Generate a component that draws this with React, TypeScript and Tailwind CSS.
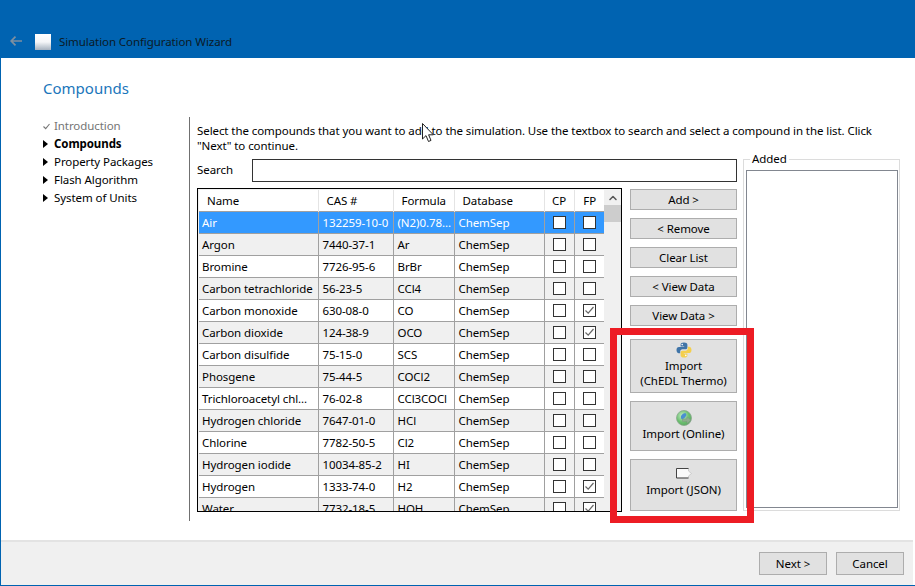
import { ChevronUp } from 'lucide-react';

type Compound = { name: string; cas: string; formula: string; fp?: boolean };

const compounds: Compound[] = [
  { name: 'Air', cas: '132259-10-0', formula: '(N2)0.78...' },
  { name: 'Argon', cas: '7440-37-1', formula: 'Ar' },
  { name: 'Bromine', cas: '7726-95-6', formula: 'BrBr' },
  { name: 'Carbon tetrachloride', cas: '56-23-5', formula: 'CCl4' },
  { name: 'Carbon monoxide', cas: '630-08-0', formula: 'CO', fp: true },
  { name: 'Carbon dioxide', cas: '124-38-9', formula: 'OCO', fp: true },
  { name: 'Carbon disulfide', cas: '75-15-0', formula: 'SCS' },
  { name: 'Phosgene', cas: '75-44-5', formula: 'COCl2' },
  { name: 'Trichloroacetyl chl...', cas: '76-02-8', formula: 'CCl3COCl' },
  { name: 'Hydrogen chloride', cas: '7647-01-0', formula: 'HCl' },
  { name: 'Chlorine', cas: '7782-50-5', formula: 'Cl2' },
  { name: 'Hydrogen iodide', cas: '10034-85-2', formula: 'HI' },
  { name: 'Hydrogen', cas: '1333-74-0', formula: 'H2', fp: true },
  { name: 'Water', cas: '7732-18-5', formula: 'HOH', fp: true },
];

const steps = [
  { label: 'Compounds', bold: true },
  { label: 'Property Packages' },
  { label: 'Flash Algorithm' },
  { label: 'System of Units' },
];

function Check({ checked }: { checked?: boolean }) {
  return (
    <div className="w-[13px] h-[13px] mx-auto border border-[#333] bg-white flex items-center justify-center">
      {checked && (
        <svg width="11" height="11" viewBox="0 0 11 11">
          <path d="M1.5 5.5 L4.2 8.2 L9.5 2" fill="none" stroke="#666" strokeWidth="1.2" />
        </svg>
      )}
    </div>
  );
}

function Btn({ label, className }: { label: string; className: string }) {
  return (
    <button className={`bg-[#e1e1e1] border border-[#adadad] flex items-center justify-center text-black ${className}`}>
      {label}
    </button>
  );
}

function PythonIcon() {
  return (
    <svg width="16" height="16" viewBox="0 0 16 16">
      <path d="M8 .5C5.6.5 4.6 1.4 4.6 2.8V4.4H8.2V5H3C1.4 5 .5 6.2.5 8.1s.9 3.2 2.3 3.2H4.2V9.4c0-1.2 1-2.2 2.2-2.2h3.2c1 0 1.8-.8 1.8-1.8V2.8C11.4 1.4 10 .5 8 .5z" fill="#3f74a8" />
      <path d="M8 15.5c2.4 0 3.4-.9 3.4-2.3v-1.6H7.8V11H13c1.6 0 2.5-1.2 2.5-3.1s-.9-3.2-2.3-3.2h-1.4v1.9c0 1.2-1 2.2-2.2 2.2H6.4c-1 0-1.8.8-1.8 1.8v2.6c0 1.4 1.4 2.3 3.4 2.3z" fill="#f4cf4d" />
      <circle cx="6.2" cy="2.6" r=".8" fill="#fff" />
      <circle cx="9.8" cy="13.4" r=".8" fill="#fff" />
    </svg>
  );
}

function GlobeIcon() {
  return (
    <svg width="16" height="16" viewBox="0 0 16 16">
      <defs>
        <radialGradient id="globe" cx="40%" cy="35%" r="70%">
          <stop offset="0%" stopColor="#c8eec8" />
          <stop offset="60%" stopColor="#6cc070" />
          <stop offset="100%" stopColor="#5aa860" />
        </radialGradient>
      </defs>
      <circle cx="8" cy="8" r="7.5" fill="url(#globe)" stroke="#8aa88e" strokeWidth=".8" />
      <path d="M5 6c1-2 3-3 4.5-3L10.5 5 9 7.5 6.5 9.5 5 8.5z" fill="#4a8fd0" />
      <path d="M6.5 9h4.5V6.8l4 3.4-4 3.4v-2.2H6.5z" fill="#8fae90" stroke="#7a987c" strokeWidth=".5" />
    </svg>
  );
}

function TagIcon() {
  return (
    <svg width="16" height="12" viewBox="0 0 16 12">
      <path d="M.5 1.5H12.5V4L15.5 6.5 12.5 9V11H.5z" fill="#fafafa" stroke="#c4c4c4" strokeWidth=".8" />
      <path d="M12.5 1.5H.5V11H12.5" fill="none" stroke="#444" strokeWidth="1" />
    </svg>
  );
}

export default function App() {
  return (
    <div className="w-[915px] h-[586px] bg-white flex flex-col overflow-hidden relative text-[11.5px] tracking-[-0.08px] text-black font-['Noto_Sans',sans-serif]">
      <div className="h-[58px] bg-[#0063b1] flex items-end pl-[10px] pb-[8px] shrink-0">
        <svg width="12" height="10" viewBox="0 0 12 10" className="mb-[4px]">
          <path d="M12 5H1.5M5.5.7 1.2 5l4.3 4.3" fill="none" stroke="#7d8fa0" strokeWidth="1.7" />
        </svg>
        <div className="w-4 h-4 ml-[13px] bg-gradient-to-b from-white via-[#f4f6f8] to-[#a6b2bf]" />
        <span className="ml-2 leading-4 text-[#0b1a26]">Simulation Configuration Wizard</span>
      </div>

      <div className="flex-1 flex flex-col border-l border-[#0063b1] min-h-0">
        <div className="pl-[42px] pt-[19px] text-[15px] tracking-normal leading-[22px] text-[#1a76bb] h-[59px] shrink-0">Compounds</div>

        <div className="flex h-[404px] pl-[42px]">
          <div className="w-[146px] shrink-0 flex flex-col">
            <div className="h-[18px] flex items-center text-[#757575]">
              <svg width="7" height="7" viewBox="0 0 7 7" className="mr-[4px]">
                <path d="M.5 3.5 2.7 5.7 6.5 1" fill="none" stroke="#777" strokeWidth="1.1" />
              </svg>
              Introduction
            </div>
            {steps.map(s => (
              <div key={s.label} className={`h-[18px] flex items-center ${s.bold ? 'font-bold' : ''}`}>
                <svg width="5" height="8" viewBox="0 0 5 8" className="mr-[6px]">
                  <path d="M0 0 5 4 0 8z" fill="#000" />
                </svg>
                {s.label}
              </div>
            ))}
          </div>

          <div className="w-[1px] bg-[#707070] shrink-0" />

          <div className="pl-[7px] flex-1 min-w-0">
            <p className="w-[690px] leading-[15px] pt-[6px] h-[42px]">
              Select the compounds that you want to add to the simulation. Use the textbox to search and select a compound in the list. Click "Next" to continue.
            </p>
            <div className="flex gap-[6px]">
              <div className="w-[540px]">
                <div className="flex items-center h-[23px]">
                  <span className="w-[55px] mt-[-2px]">Search</span>
                  <div className="w-[485px] h-[23px] border border-[#333] bg-white" />
                </div>
                <div className="flex gap-[8px] mt-[6px]">
                  <div className="w-[425px] h-[324px] border border-black flex overflow-hidden shrink-0 bg-[#f0f0f0]">
                    <div className="w-[407px] overflow-hidden pl-[1px] pt-[1px]">
                      <table className="w-[406px] table-fixed border-collapse">
                        <colgroup>
                          <col className="w-[119px]" />
                          <col className="w-[75px]" />
                          <col className="w-[61px]" />
                          <col className="w-[90px]" />
                          <col className="w-[30px]" />
                          <col className="w-[31px]" />
                        </colgroup>
                        <thead>
                          <tr className="h-[21px] bg-white border-b border-[#d8d8d8]">
                            <th className="font-normal text-left pl-[8px] border-r border-[#e4e4e4]">Name</th>
                            <th className="font-normal text-left pl-[8px] border-r border-[#e4e4e4]">CAS #</th>
                            <th className="font-normal text-left pl-[8px] border-r border-[#e4e4e4]">Formula</th>
                            <th className="font-normal text-left pl-[8px] border-r border-[#e4e4e4]">Database</th>
                            <th className="font-normal border-r border-[#e4e4e4]">CP</th>
                            <th className="font-normal">FP</th>
                          </tr>
                        </thead>
                        <tbody>
                          {compounds.map((c, i) => (
                            <tr
                              key={c.name}
                              className={`h-[22px] ${i === 0 ? 'bg-[#3399ff] text-white' : i % 2 ? 'bg-[#f0f0f0]' : 'bg-white'}`}
                            >
                              <td className="pl-[3px] pt-[2px] pr-0 pb-0 border border-l-0 border-[#a0a0a0] whitespace-nowrap overflow-hidden">{c.name}</td>
                              <td className="pl-[4px] pt-[2px] pr-0 pb-0 border border-[#a0a0a0] whitespace-nowrap overflow-hidden">{c.cas}</td>
                              <td className="pl-[4px] pt-[2px] pr-0 pb-0 border border-[#a0a0a0] whitespace-nowrap overflow-hidden">{c.formula}</td>
                              <td className="pl-[4px] pt-[2px] pr-0 pb-0 border border-[#a0a0a0]">ChemSep</td>
                              <td className="p-0 border border-[#a0a0a0]"><Check /></td>
                              <td className="p-0 border border-[#a0a0a0]"><Check checked={c.fp} /></td>
                            </tr>
                          ))}
                        </tbody>
                      </table>
                    </div>
                    <div className="w-[17px] ml-[-1px] bg-[#f0f0f0] flex flex-col items-center shrink-0">
                      <ChevronUp size={12} strokeWidth={3} className="text-[#555] mt-[3px] mb-[1px]" />
                      <div className="w-full h-[17px] bg-[#cdcdcd]" />
                    </div>
                  </div>

                  <div className="w-[107px] shrink-0 flex flex-col mt-[1px]">
                    <Btn label="Add >" className="h-[21px] mb-[8px]" />
                    <Btn label="< Remove" className="h-[21px] mb-[8px]" />
                    <Btn label="Clear List" className="h-[21px] mb-[8px]" />
                    <Btn label="< View Data" className="h-[21px] mb-[8px]" />
                    <Btn label="View Data >" className="h-[21px] mb-[13px]" />
                    <button className="h-[54px] mb-[8px] bg-[#e1e1e1] border border-[#adadad] flex flex-col items-center leading-[15px] pt-[2px]">
                      <PythonIcon />
                      <span>Import</span>
                      <span>(ChEDL Thermo)</span>
                    </button>
                    <button className="h-[50px] mb-[8px] bg-[#e1e1e1] border border-[#adadad] flex flex-col items-center leading-[15px] pt-[8px]">
                      <GlobeIcon />
                      <span>Import (Online)</span>
                    </button>
                    <button className="h-[52px] bg-[#e1e1e1] border border-[#adadad] flex flex-col items-center leading-[15px] pt-[7px]">
                      <TagIcon />
                      <span className="mt-[3px]">Import (JSON)</span>
                    </button>
                  </div>
                </div>
              </div>

              <fieldset className="w-[157px] h-[359px] mt-[-7px] border border-[#dcdcdc] pl-[2px] pr-[1px] pt-[4px] shrink-0 min-w-0">
                <legend className="ml-[4px] px-[2px] leading-[14px]">Added</legend>
                <div className="h-[338px] border border-[#828790] bg-white" />
              </fieldset>
            </div>
          </div>
        </div>

        <div className="flex-1 bg-[#f0f0f0] border-t-2 border-[#e3e3e3] flex justify-end items-start gap-[9px] pt-[10px] pr-[9px] mt-[19px] mr-[2px]">
          <Btn label="Next >" className="w-[68px] h-[23px]" />
          <Btn label="Cancel" className="w-[68px] h-[23px]" />
        </div>
      </div>
      <div className="h-[1px] bg-[#0063b1] shrink-0" />

      {/* red annotation on top of the screenshot */}
      <div className="absolute left-[610px] top-[328px] w-[144px] h-[195px] border-[7px] border-[#ed1c24] pointer-events-none" />
      {/* mouse pointer */}
      <svg className="absolute left-[422px] top-[123px]" width="12" height="19" viewBox="0 0 12 19">
        <path d="M.5.5V16L4 12.6 6.5 18.5 9 17.4 6.6 11.8H11.3z" fill="#fff" stroke="#222" strokeWidth="1" />
      </svg>
    </div>
  );
}
